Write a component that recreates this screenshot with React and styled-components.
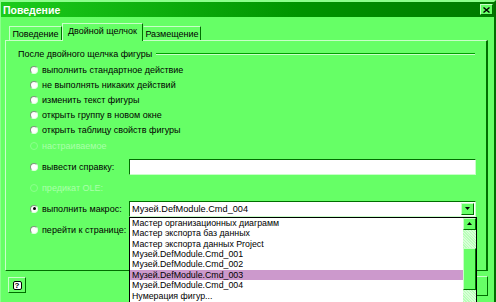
import React from "react";
import styled, { createGlobalStyle } from "styled-components";

const FACE = "#66ff66";
const LIGHT = "#c8ffc8";
const SHADOW = "#00a000";
const DARK = "#006e00";

const GlobalStyle = createGlobalStyle`
  html, body {
    margin: 0;
    padding: 0;
    background: ${FACE};
  }
  body {
    font-family: "Liberation Sans", Arial, sans-serif;
    font-size: 9px;
    color: #000;
  }
`;

const Window = styled.div`
  position: relative;
  width: 496px;
  height: 302px;
  overflow: hidden;
  box-sizing: border-box;
  background: ${FACE};
  border-top: 2px solid #8cff8c;
  border-left: 1px solid #8cff8c;
  border-right: 2px solid ${DARK};
  display: flex;
  flex-direction: column;
`;

const TitleBar = styled.div`
  height: 15px;
  display: flex;
  align-items: center;
  justify-content: space-between;
  padding: 0 1px 0 2px;
  background: linear-gradient(to right, #1ccc1c, #009400 60%, #007a00);
`;

const Title = styled.span`
  color: #fff;
  font-weight: bold;
  font-size: 10.5px;
`;

const CloseButton = styled.div`
  width: 13px;
  height: 11px;
  box-sizing: border-box;
  background: ${FACE};
  border: 1px solid;
  border-color: ${LIGHT} ${DARK} ${DARK} ${LIGHT};
  display: flex;
  align-items: center;
  justify-content: center;
`;

const TabStrip = styled.div`
  display: flex;
  align-items: flex-end;
  height: 17px;
  margin-top: 6px;
  padding-left: 8px;
`;

const Tab = styled.div`
  box-sizing: border-box;
  width: ${(p) => p.$w}px;
  height: ${(p) => (p.$active ? "18px" : "14px")};
  font-size: 9px;
  white-space: nowrap;
  display: flex;
  align-items: center;
  justify-content: center;
  border-top: 1px solid ${LIGHT};
  border-left: 1px solid ${(p) => (p.$first || p.$active ? LIGHT : "transparent")};
  border-right: 1px solid ${DARK};
  background: ${FACE};
  position: relative;
  z-index: ${(p) => (p.$active ? 2 : 1)};
  margin-bottom: ${(p) => (p.$active ? "-1px" : "0")};
  padding-bottom: ${(p) => (p.$active ? "3px" : "0")};
`;

const Panel = styled.div`
  margin-left: 4px;
  width: 483px;
  height: 231px;
  box-sizing: border-box;
  border-top: 1px solid ${LIGHT};
  border-left: 1px solid ${LIGHT};
  border-right: 2px solid ${DARK};
  border-bottom: 1px solid ${DARK};
  padding: 7px 0 0 12px;
  display: flex;
  flex-direction: column;
`;

const Section = styled.div`
  display: flex;
  align-items: center;
  gap: 4px;
  width: 457px;
  height: 11px;
`;

const Rule = styled.div`
  flex: 1;
  height: 0;
  border-top: 1px solid ${SHADOW};
  border-bottom: 1px solid ${LIGHT};
`;

const Options = styled.div`
  display: flex;
  flex-direction: column;
  padding: 3px 0 0 12px;
`;

const Row = styled.label`
  display: flex;
  align-items: center;
  gap: 4px;
  height: ${(p) => (p.$tall ? "21px" : "15.2px")};
  margin-top: ${(p) => (p.$gap ? "3px" : "0")};
  color: ${(p) => (p.$disabled ? "#aaffaa" : "#000")};
  white-space: nowrap;
  position: relative;
`;

const Radio = styled.span`
  width: 8px;
  height: 8px;
  flex: none;
  box-sizing: border-box;
  border-radius: 50%;
  background: ${(p) => (p.$disabled ? FACE : "#fff")};
  border: 1px solid;
  border-color: ${(p) => (p.$disabled ? "#8cff8c" : "#7a9a7a #e0ffe0 #e0ffe0 #7a9a7a")};
  display: flex;
  align-items: center;
  justify-content: center;
  &::after {
    content: "";
    width: 3px;
    height: 3px;
    border-radius: 50%;
    background: ${(p) => (p.$checked ? "#000" : "transparent")};
  }
`;

const FieldLabel = styled.span`
  width: 83px;
  flex: none;
  white-space: nowrap;
`;

const TextField = styled.div`
  width: 347px;
  height: 16px;
  box-sizing: border-box;
  background: #fff;
  border: 1px solid;
  border-color: ${DARK} ${LIGHT} ${LIGHT} ${DARK};
`;

const Combo = styled.div`
  position: relative;
  width: 347px;
  height: 16px;
  box-sizing: border-box;
  background: #fff;
  border: 1px solid;
  border-color: ${DARK} ${LIGHT} ${LIGHT} ${DARK};
  display: flex;
  align-items: center;
  justify-content: space-between;
  padding: 0 1px 0 2px;
  font-size: 9.2px;
`;

const ArrowButton = styled.div`
  width: 13px;
  height: 12px;
  box-sizing: border-box;
  background: ${FACE};
  border: 1px solid;
  border-color: ${LIGHT} ${DARK} ${DARK} ${LIGHT};
  display: flex;
  align-items: center;
  justify-content: center;
`;

const DropList = styled.div`
  position: absolute;
  top: 15px;
  left: -1px;
  width: 348px;
  height: 110px;
  box-sizing: border-box;
  background: #fff;
  border: 1px solid #000;
  display: flex;
  z-index: 5;
  font-size: 8.8px;
`;

const Items = styled.div`
  flex: 1;
`;

const Item = styled.div`
  height: 10.45px;
  line-height: 10.45px;
  padding-left: 2px;
  background: ${(p) => (p.$selected ? "#cc99cc" : "transparent")};
`;

const ScrollBar = styled.div`
  width: 13px;
  display: flex;
  flex-direction: column;
  background: repeating-linear-gradient(45deg, #d8ffd8 0 1px, #b8ffb8 1px 2px);
`;

const ScrollBtn = styled.div`
  height: 12px;
  box-sizing: border-box;
  background: ${FACE};
  border: 1px solid;
  border-color: ${LIGHT} ${DARK} ${DARK} ${LIGHT};
  display: flex;
  align-items: center;
  justify-content: center;
`;

const Thumb = styled.div`
  margin-top: 18px;
  height: 42px;
  box-sizing: border-box;
  background: ${FACE};
  border: 1px solid;
  border-color: ${LIGHT} ${DARK} ${DARK} ${LIGHT};
`;

const Footer = styled.div`
  flex: 1;
  display: flex;
  justify-content: space-between;
  align-items: flex-start;
  padding: 5px 6px 0 7px;
`;

const HelpButton = styled.div`
  margin-top: 1px;
  width: 18px;
  height: 16px;
  box-sizing: border-box;
  background: ${FACE};
  border: 1px solid;
  border-color: ${LIGHT} ${DARK} ${DARK} ${LIGHT};
  display: flex;
  align-items: center;
  justify-content: center;
`;

const Bubble = styled.span`
  width: 9px;
  height: 9px;
  box-sizing: border-box;
  background: #fff;
  border: 1px solid #000;
  border-radius: 2px;
  font-weight: bold;
  font-size: 8px;
  line-height: 7px;
  text-align: center;
`;

const Buttons = styled.div`
  display: flex;
  gap: 6px;
`;

const PushButton = styled.div`
  width: 72px;
  height: 20px;
  box-sizing: border-box;
  background: ${FACE};
  border: 1px solid;
  border-color: ${LIGHT} ${DARK} ${DARK} ${LIGHT};
  display: flex;
  align-items: center;
  justify-content: center;
`;

const Triangle = ({ up }) => (
  <svg width="5" height="3" viewBox="0 0 5 3">
    <polygon points={up ? "2.5,0 5,3 0,3" : "0,0 5,0 2.5,3"} fill="#000" />
  </svg>
);

const simple = [
  "выполнить стандартное действие",
  "не выполнять никаких действий",
  "изменить текст фигуры",
  "открыть группу в новом окне",
  "открыть таблицу свойств фигуры",
];

const macros = [
  "Мастер организационных диаграмм",
  "Мастер экспорта баз данных",
  "Мастер экспорта данных Project",
  "Музей.DefModule.Cmd_001",
  "Музей.DefModule.Cmd_002",
  "Музей.DefModule.Cmd_003",
  "Музей.DefModule.Cmd_004",
  "Нумерация фигур...",
];

export default function App() {
  return (
    <>
      <GlobalStyle />
      <Window>
        <TitleBar>
          <Title>Поведение</Title>
          <CloseButton>
            <svg width="7" height="6" viewBox="0 0 7 6">
              <path d="M0.5 0.5 L6.5 5.5 M6.5 0.5 L0.5 5.5" stroke="#000" strokeWidth="1.4" />
            </svg>
          </CloseButton>
        </TitleBar>

        <TabStrip>
          <Tab $first $w={53}>Поведение</Tab>
          <Tab $active $w={81}>Двойной щелчок</Tab>
          <Tab $w={58}>Размещение</Tab>
        </TabStrip>

        <Panel>
          <Section>
            <span>После двойного щелчка фигуры</span>
            <Rule />
          </Section>
          <Options>
            {simple.map((t) => (
              <Row key={t}>
                <Radio />
                {t}
              </Row>
            ))}
            <Row $disabled>
              <Radio $disabled />
              настраиваемое
            </Row>
            <Row $tall $gap>
              <Radio />
              <FieldLabel>вывести справку:</FieldLabel>
              <TextField />
            </Row>
            <Row $tall $disabled>
              <Radio $disabled />
              предикат OLE:
            </Row>
            <Row $tall>
              <Radio $checked />
              <FieldLabel>выполнить макрос:</FieldLabel>
              <Combo>
                <span>Музей.DefModule.Cmd_004</span>
                <ArrowButton>
                  <Triangle />
                </ArrowButton>
                <DropList>
                  <Items>
                    {macros.map((m) => (
                      <Item key={m} $selected={m.endsWith("003")}>
                        {m}
                      </Item>
                    ))}
                  </Items>
                  <ScrollBar>
                    <ScrollBtn>
                      <Triangle up />
                    </ScrollBtn>
                    <Thumb />
                  </ScrollBar>
                </DropList>
              </Combo>
            </Row>
            <Row $tall>
              <Radio />
              <FieldLabel>перейти к странице:</FieldLabel>
            </Row>
          </Options>
        </Panel>

        <Footer>
          <HelpButton>
            <Bubble>?</Bubble>
          </HelpButton>
          <Buttons>
            <PushButton>OK</PushButton>
            <PushButton>Отмена</PushButton>
          </Buttons>
        </Footer>
      </Window>
    </>
  );
}
